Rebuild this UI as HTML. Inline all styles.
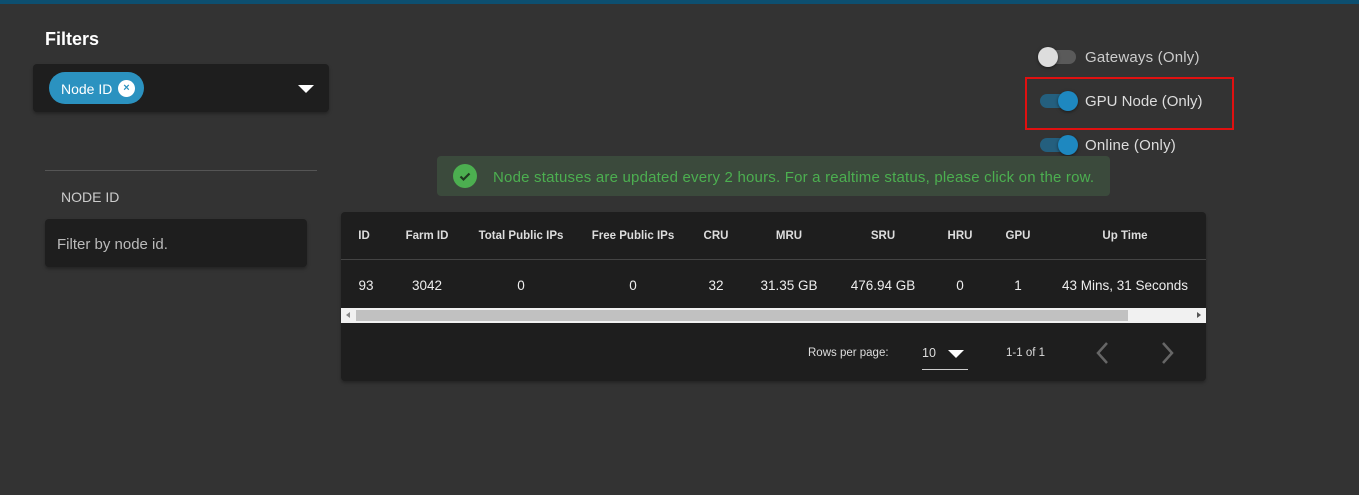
<!DOCTYPE html><html><head><style>
*{margin:0;padding:0;box-sizing:border-box}
body{width:1359px;height:495px;background:#333;font-family:"Liberation Sans",sans-serif;position:relative;overflow:hidden;color:#fff}
.a{position:absolute;white-space:nowrap}
.c{transform:translateX(-50%)}
.h{font-size:11.5px;font-weight:bold;color:#ddd}
.d{font-size:13.5px;color:#eee}
.tg{position:absolute;width:36px;height:14px;border-radius:7px}
.kn{position:absolute;width:20px;height:20px;border-radius:50%;top:-3px;box-shadow:0 1px 3px rgba(0,0,0,.5)}
</style></head><body>
<div class="a" style="left:0;top:0;width:1359px;height:4px;background:#0d4f70"></div>
<div class="a" style="left:45px;top:29px;font-size:18px;font-weight:bold">Filters</div>
<div class="a" style="left:33px;top:64px;width:296px;height:48px;background:#1e1e1e;border-radius:4px;box-shadow:0 2px 3px rgba(0,0,0,.3)"></div>
<div class="a" style="left:49px;top:72px;width:95px;height:32px;background:#2b92c0;border-radius:16px"></div>
<div class="a" style="left:61px;top:81px;font-size:14px">Node ID</div>
<div class="a" style="left:118px;top:80px;width:17px;height:17px;border-radius:50%;background:#fff;color:#2b92c0;font-size:11px;font-weight:bold;text-align:center;line-height:17px">×</div>
<div class="a" style="left:298px;top:85px;width:0;height:0;border-left:8px solid transparent;border-right:8px solid transparent;border-top:8px solid #fff"></div>
<div class="a" style="left:45px;top:170px;width:272px;height:1px;background:#555"></div>
<div class="a" style="left:61px;top:189px;font-size:14px;color:#ccc">NODE ID</div>
<div class="a" style="left:45px;top:219px;width:262px;height:48px;background:#1e1e1e;border-radius:4px;box-shadow:0 2px 3px rgba(0,0,0,.3)"></div>
<div class="a" style="left:57px;top:236px;font-size:15px;color:#bbb">Filter by node id.</div>

<div class="tg" style="left:1040px;top:50px;background:#5a5a5a"><div class="kn" style="left:-2px;background:#ddd"></div></div>
<div class="a" style="left:1085px;top:49px;font-size:15px;color:#ccc;letter-spacing:0.2px">Gateways (Only)</div>
<div class="a" style="left:1025px;top:77px;width:209px;height:53px;border:2px solid #e01010"></div>
<div class="tg" style="left:1040px;top:94px;background:#245f7e"><div class="kn" style="left:18px;background:#1e88c0"></div></div>
<div class="a" style="left:1085px;top:93px;font-size:15px;color:#ddd">GPU Node (Only)</div>
<div class="tg" style="left:1040px;top:138px;background:#245f7e"><div class="kn" style="left:18px;background:#1e88c0"></div></div>
<div class="a" style="left:1085px;top:137px;font-size:15px;color:#ddd;letter-spacing:0.2px">Online (Only)</div>

<div class="a" style="left:437px;top:156px;width:673px;height:40px;background:#3b4a3c;border-radius:4px"></div>
<div class="a" style="left:453px;top:164px;width:24px;height:24px;border-radius:50%;background:#4caf50"><svg width="24" height="24"><path d="M7.5 12.5l3 3 6-6" stroke="#1f3a20" stroke-width="2.2" fill="none"/></svg></div>
<div class="a" style="left:493px;top:169px;font-size:15px;color:#4caf50;letter-spacing:0.2px">Node statuses are updated every 2 hours. For a realtime status, please click on the row.</div>

<div class="a" style="left:341px;top:212px;width:865px;height:169px;background:#1e1e1e;border-radius:4px;box-shadow:0 2px 3px rgba(0,0,0,.3)"></div>
<div class="a" style="left:341px;top:259px;width:865px;height:1px;background:#444"></div>
<div class="a h c" style="left:364px;top:230px">ID</div>
<div class="a h c" style="left:427px;top:230px">Farm ID</div>
<div class="a h c" style="left:521px;top:230px">Total Public IPs</div>
<div class="a h c" style="left:633px;top:230px">Free Public IPs</div>
<div class="a h c" style="left:716px;top:230px">CRU</div>
<div class="a h c" style="left:789px;top:230px">MRU</div>
<div class="a h c" style="left:883px;top:230px">SRU</div>
<div class="a h c" style="left:960px;top:230px">HRU</div>
<div class="a h c" style="left:1018px;top:230px">GPU</div>
<div class="a h c" style="left:1125px;top:230px">Up Time</div>
<div class="a d c" style="left:366px;top:278px">93</div>
<div class="a d c" style="left:427px;top:278px">3042</div>
<div class="a d c" style="left:521px;top:278px">0</div>
<div class="a d c" style="left:633px;top:278px">0</div>
<div class="a d c" style="left:716px;top:278px">32</div>
<div class="a d c" style="left:789px;top:278px">31.35 GB</div>
<div class="a d c" style="left:883px;top:278px">476.94 GB</div>
<div class="a d c" style="left:960px;top:278px">0</div>
<div class="a d c" style="left:1018px;top:278px">1</div>
<div class="a d c" style="left:1125px;top:278px">43 Mins, 31 Seconds</div>
<div class="a" style="left:341px;top:308px;width:865px;height:15px;background:#f1f1f1"></div>
<div class="a" style="left:356px;top:310px;width:772px;height:11px;background:#c1c1c1"></div>
<div class="a" style="left:346px;top:312px;border-top:3px solid transparent;border-bottom:3px solid transparent;border-right:4px solid #888"></div>
<div class="a" style="left:1197px;top:312px;border-top:3px solid transparent;border-bottom:3px solid transparent;border-left:4px solid #555"></div>
<div class="a" style="left:808px;top:347px;font-size:11.5px;color:#ddd">Rows per page:</div>
<div class="a" style="left:922px;top:346px;font-size:12.5px;color:#ddd">10</div>
<div class="a" style="left:948px;top:350px;border-left:8px solid transparent;border-right:8px solid transparent;border-top:8px solid #fff"></div>
<div class="a" style="left:922px;top:369px;width:46px;height:1px;background:#ccc"></div>
<div class="a" style="left:1006px;top:347px;font-size:11.5px;color:#ddd">1-1 of 1</div>
<svg class="a" style="left:1092px;top:341px" width="90" height="24"><path d="M15 2l-9 10 9 10" stroke="#666" stroke-width="2.5" fill="none"/><path d="M71 2l9 10-9 10" stroke="#666" stroke-width="2.5" fill="none"/></svg>
</body></html>
